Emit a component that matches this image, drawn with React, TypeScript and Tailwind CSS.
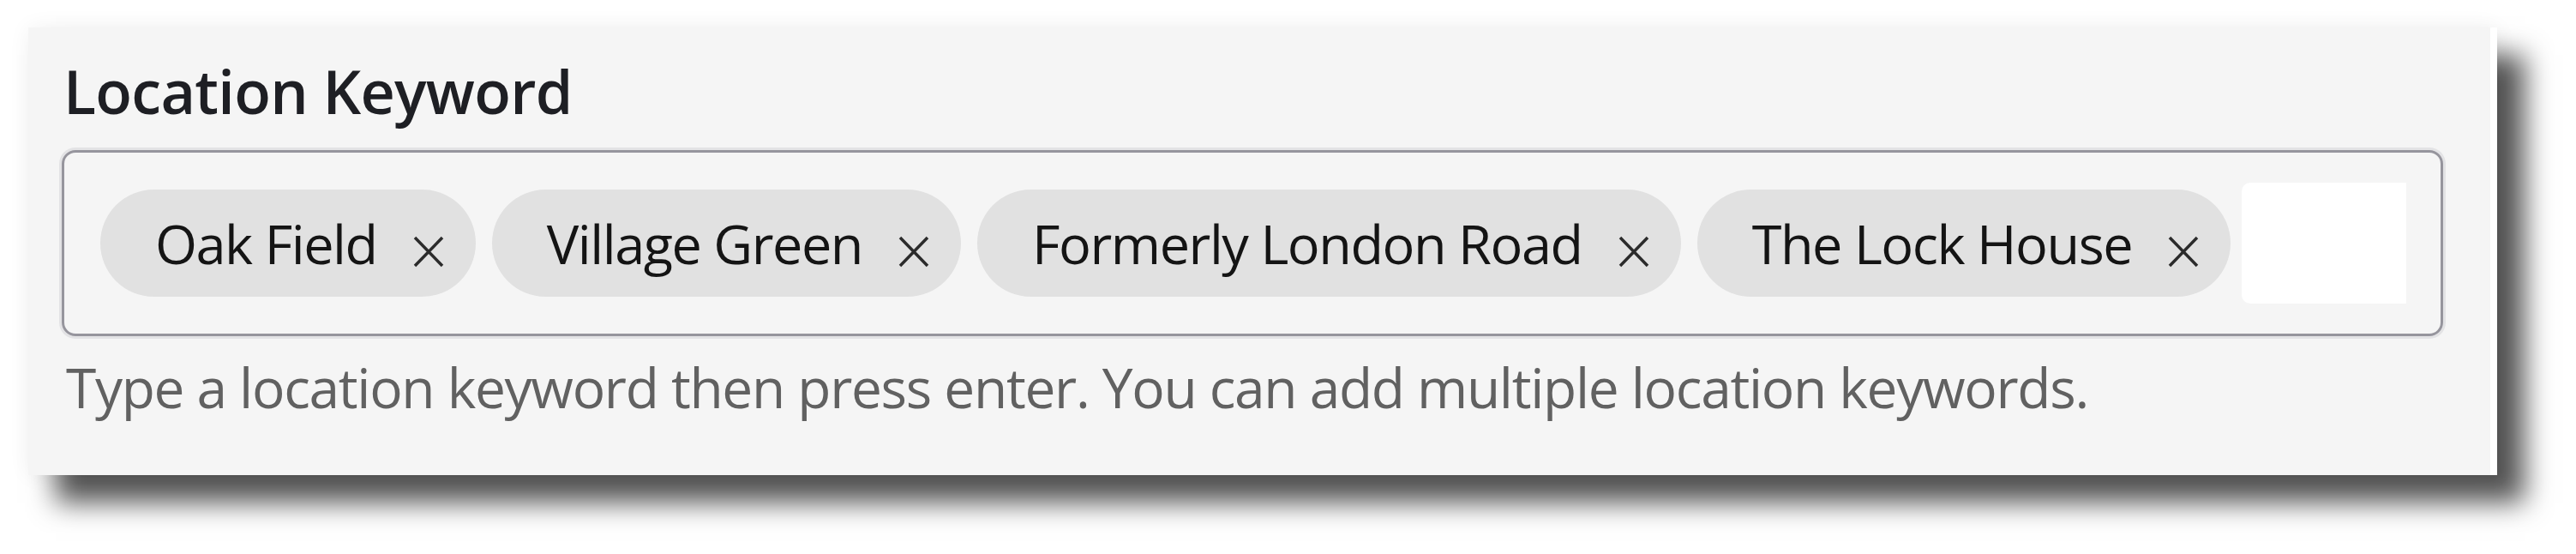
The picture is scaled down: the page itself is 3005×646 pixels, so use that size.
import React from 'react';

const keywords = ['Oak Field', 'Village Green', 'Formerly London Road', 'The Lock House'];

function CloseIcon() {
  return (
    <svg width="36" height="37" viewBox="0 0 36 37" className="mt-[20px] shrink-0" aria-hidden="true">
      <path d="M2 2L34 35M34 2L2 35" stroke="#2b2b2b" strokeWidth="3.5" />
    </svg>
  );
}

function KeywordChip({ label }: { label: string }) {
  return (
    <div className="flex h-[125px] shrink-0 items-center rounded-full bg-[#e1e1e1] pl-[64px] pr-[37px]">
      <span className="whitespace-nowrap text-[63px] leading-[63px] tracking-[-1.45px] text-[#141414]">{label}</span>
      <button type="button" className="ml-[42px] flex items-center" aria-label={`Remove ${label}`}>
        <CloseIcon />
      </button>
    </div>
  );
}

export default function App() {
  return (
    <div className="min-h-screen bg-white pl-[33px] pt-[32px] font-['Open_Sans',sans-serif]">
      <div className="w-[2880px] border-r-[8px] border-white bg-[#f5f5f5] pb-[70px] pl-[39px] pr-[55px] pt-[39px] shadow-[0_0_24px_rgba(0,0,0,0.06),32px_32px_30px_rgba(0,0,0,0.67)]">
        <label className="block pl-[2px] text-[70px] font-semibold leading-[70px] tracking-[-0.7px] text-[#1e1f24]">
          Location Keyword
        </label>

        <div className="mt-[34px] flex h-[217px] items-center overflow-hidden rounded-[16px] border-[3px] border-[#96959d] pl-[42px] shadow-[0_0_0_3px_#e3e3e5]">
          <div className="flex items-center gap-[19px]">
            {keywords.map(k => (
              <KeywordChip key={k} label={k} />
            ))}
            <input className="-ml-[6px] h-[141px] w-[192px] shrink-0 rounded-l-[10px] bg-white outline-none" />
          </div>
        </div>

        <p className="mt-[28px] whitespace-nowrap pl-[5px] text-[64px] leading-[64px] tracking-[-1.3px] text-[#616161]">
          Type a location keyword then press enter. You can add multiple location keywords.
        </p>
      </div>
    </div>
  );
}
